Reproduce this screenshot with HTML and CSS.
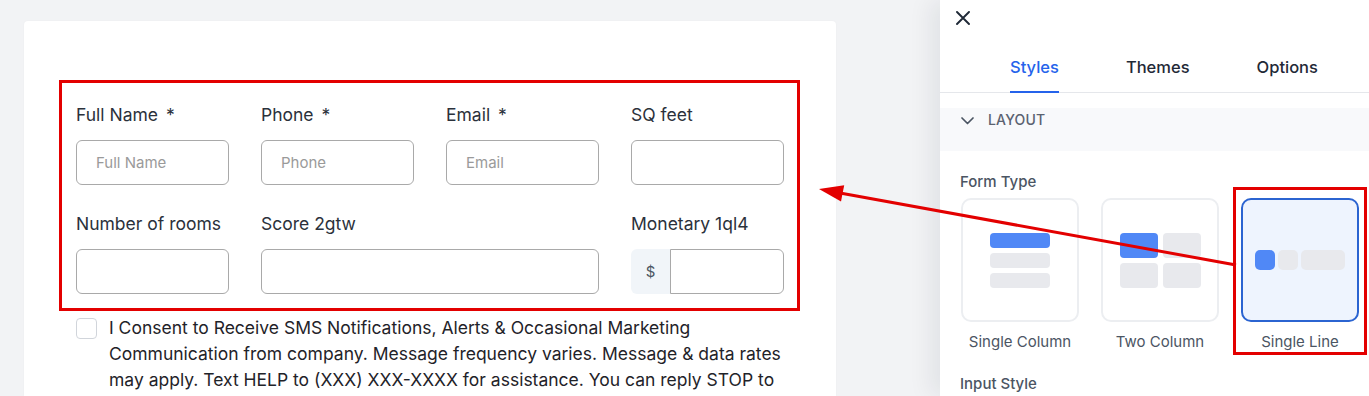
FILE: index.html
```html
<!DOCTYPE html>
<html lang="en">
<head>
<meta charset="utf-8">
<title>Form builder – Styles</title>
<link rel="stylesheet" href="styles.css">
</head>
<body>
<main class="canvas">
  <section class="form-card">
    <div class="fields highlight">
      <div class="field">
        <label class="field-label">Full Name <span class="req">*</span></label>
        <input class="input" type="text" placeholder="Full Name">
      </div>
      <div class="field">
        <label class="field-label">Phone <span class="req">*</span></label>
        <input class="input" type="text" placeholder="Phone">
      </div>
      <div class="field">
        <label class="field-label">Email <span class="req">*</span></label>
        <input class="input" type="text" placeholder="Email">
      </div>
      <div class="field">
        <label class="field-label">SQ feet</label>
        <input class="input" type="text">
      </div>
      <div class="field">
        <label class="field-label">Number of rooms</label>
        <input class="input" type="text">
      </div>
      <div class="field span-2">
        <label class="field-label">Score 2gtw</label>
        <input class="input" type="text">
      </div>
      <div class="field">
        <label class="field-label">Monetary 1ql4</label>
        <div class="money">
          <span class="money-prefix">$</span>
          <input class="money-input" type="text">
        </div>
      </div>
    </div>
    <div class="consent">
      <span class="checkbox"></span>
      <p class="consent-text">I Consent to Receive SMS Notifications, Alerts &amp; Occasional Marketing Communication from company. Message frequency varies. Message &amp; data rates may apply. Text HELP to (XXX) XXX-XXXX for assistance. You can reply STOP to unsubscribe at any time.</p>
    </div>
  </section>
</main>

<aside class="panel">
  <div class="panel-head">
    <button class="close" aria-label="Close">
      <svg width="14" height="14" viewBox="0 0 14 14"><path d="M1 1L13 13M13 1L1 13" stroke="#1f2937" stroke-width="1.9" stroke-linecap="round" fill="none"/></svg>
    </button>
  </div>
  <nav class="tabs">
    <span class="tab active">Styles</span>
    <span class="tab">Themes</span>
    <span class="tab">Options</span>
  </nav>
  <div class="section-bar">
    <svg class="chevron" width="13" height="8" viewBox="0 0 13 8"><path d="M1 1L6.5 6.5L12 1" stroke="#4b5563" stroke-width="1.7" fill="none" stroke-linecap="round" stroke-linejoin="round"/></svg>
    <span class="section-title">LAYOUT</span>
  </div>
  <div class="group">
    <div class="group-label">Form Type</div>
    <div class="options">
      <div class="option">
        <div class="opt-card">
          <div class="sc">
            <span class="bar blue"></span>
            <span class="bar"></span>
            <span class="bar"></span>
          </div>
        </div>
        <div class="opt-label">Single Column</div>
      </div>
      <div class="option">
        <div class="opt-card">
          <div class="tc">
            <span class="cell blue"></span>
            <span class="cell"></span>
            <span class="cell"></span>
            <span class="cell"></span>
          </div>
        </div>
        <div class="opt-label">Two Column</div>
      </div>
      <div class="option annotated">
        <div class="opt-card selected">
          <div class="sl">
            <span class="sq blue"></span>
            <span class="sq"></span>
            <span class="sq wide"></span>
          </div>
        </div>
        <div class="opt-label">Single Line</div>
      </div>
    </div>
    <div class="group-label next">Input Style</div>
  </div>
</aside>

<svg class="arrow" width="1369" height="396" viewBox="0 0 1369 396">
  <line x1="1236" y1="265" x2="840" y2="193" stroke="#e30000" stroke-width="3"/>
  <polygon points="819,189 844.2,185.2 841,201.5" fill="#e30000"/>
</svg>
</body>
</html>
```

FILE: styles.css
```css
* { box-sizing: border-box; }

html, body {
  margin: 0;
  padding: 0;
}

body {
  width: 1369px;
  height: 396px;
  overflow: hidden;
  display: flex;
  position: relative;
  font-family: Inter, "Noto Sans", "Liberation Sans", sans-serif;
  color: #1f2937;
  background: #f3f4f6;
}

/* ---------- left canvas ---------- */
.canvas {
  width: 940px;
  flex: none;
  padding: 21px 0 0 24px;
  background: #f2f3f5;
}

.form-card {
  width: 812px;
  height: 100%;
  background: #ffffff;
  border-radius: 4px 4px 0 0;
  padding: 59px 0 0 35px;
  box-shadow: 0 0 2px rgba(0, 0, 0, 0.04);
  overflow: hidden;
}

.fields {
  width: 741px;
  display: grid;
  grid-template-columns: repeat(4, 153px);
  column-gap: 32px;
  row-gap: 29px;
  padding: 22px 13px 14px 14px;
}

.highlight {
  border: 3px solid #e30000;
}

.field {
  display: flex;
  flex-direction: column;
}

.span-2 { grid-column: span 2; }

.field-label {
  font-size: 17.5px;
  line-height: 20px;
  color: #2b313b;
  margin-bottom: 15px;
  white-space: nowrap;
}

.req { margin-left: 3px; }

.input {
  height: 45px;
  width: 100%;
  border: 1px solid #a9a9a9;
  border-radius: 6px;
  padding: 0 19px;
  font-family: inherit;
  font-size: 15px;
  color: #374151;
  background: #fff;
  outline: none;
}

.input::placeholder { color: #9a9a9a; }

.money {
  display: flex;
  height: 45px;
}

.money-prefix {
  width: 39px;
  flex: none;
  background: #f1f5f9;
  border-radius: 6px 0 0 6px;
  display: flex;
  align-items: center;
  justify-content: center;
  font-size: 15px;
  color: #4b5563;
}

.money-input {
  flex: 1;
  min-width: 0;
  border: 1px solid #a9a9a9;
  border-radius: 0 6px 6px 0;
  background: #fff;
  outline: none;
}

.consent {
  display: flex;
  gap: 12px;
  margin: 4px 0 0 17px;
}

.checkbox {
  width: 21px;
  height: 21px;
  flex: none;
  margin-top: 3px;
  border: 1px solid #d1d5db;
  border-radius: 4px;
  background: #fff;
}

.consent-text {
  margin: 0;
  width: 690px;
  font-size: 17.5px;
  line-height: 26px;
  color: #1f2329;
}

/* ---------- right panel ---------- */
.panel {
  width: 429px;
  flex: none;
  background: #ffffff;
  box-shadow: -10px 0 22px rgba(17, 24, 39, 0.07);
  position: relative;
  z-index: 1;
}

.panel-head {
  height: 55px;
  padding: 11px 0 0 16px;
}

.close {
  display: block;
  width: 14px;
  height: 14px;
  padding: 0;
  border: 0;
  background: none;
}

.close svg { display: block; }

.tabs {
  display: flex;
  gap: 67px;
  padding-left: 70px;
  border-bottom: 1px solid #e5e7eb;
}

.tab {
  font-size: 16.5px;
  font-weight: 500;
  line-height: 24px;
  padding-bottom: 12px;
  margin-bottom: -1px;
  border-bottom: 2px solid transparent;
  color: #1f2937;
}

.tab.active {
  color: #2563eb;
  border-bottom-color: #2563eb;
}

.section-bar {
  margin-top: 15px;
  height: 43px;
  background: #f8f9fb;
  display: flex;
  align-items: flex-start;
  padding: 2px 0 0 21px;
}

.chevron {
  display: block;
  margin-top: 7px;
}

.section-title {
  margin-left: 14px;
  font-size: 14px;
  line-height: 20px;
  font-weight: 500;
  color: #5b6270;
  letter-spacing: 0.2px;
}

.group {
  padding: 21px 0 0 20px;
}

.group-label {
  font-size: 15px;
  line-height: 20px;
  color: #4b5563;
  font-weight: 500;
}

.group-label.next { margin-top: 22px; }

.options {
  display: flex;
  gap: 22px;
  margin-top: 6px;
  padding-left: 1px;
}

.option {
  width: 118px;
  display: flex;
  flex-direction: column;
  align-items: center;
  position: relative;
}

.annotated::after {
  content: "";
  position: absolute;
  top: -11px;
  left: -8px;
  right: -8px;
  bottom: -3px;
  border: 3px solid #e30000;
  pointer-events: none;
}

.opt-card {
  width: 118px;
  height: 124px;
  border: 2px solid #eceef1;
  border-radius: 10px;
  background: #fff;
  display: flex;
  align-items: center;
  justify-content: center;
}

.opt-card.selected {
  background: #eef4fe;
  border-color: #2b64d1;
}

.opt-label {
  margin-top: 10px;
  font-size: 15px;
  line-height: 20px;
  color: #4b5563;
  white-space: nowrap;
}

.sc {
  display: flex;
  flex-direction: column;
  gap: 5px;
}

.bar {
  width: 60px;
  height: 15px;
  border-radius: 4px;
  background: #e8e9ed;
}

.tc {
  display: grid;
  grid-template-columns: 38px 38px;
  gap: 5px;
}

.cell {
  height: 25px;
  border-radius: 4px;
  background: #e8e9ed;
}

.sl {
  display: flex;
  gap: 3px;
}

.sq {
  width: 20px;
  height: 20px;
  border-radius: 5px;
  background: #e8e9ed;
}

.sq.wide { width: 44px; }

.blue { background: #5088f6; }

/* ---------- annotation arrow ---------- */
.arrow {
  position: absolute;
  left: 0;
  top: 0;
  z-index: 5;
  pointer-events: none;
}
```
